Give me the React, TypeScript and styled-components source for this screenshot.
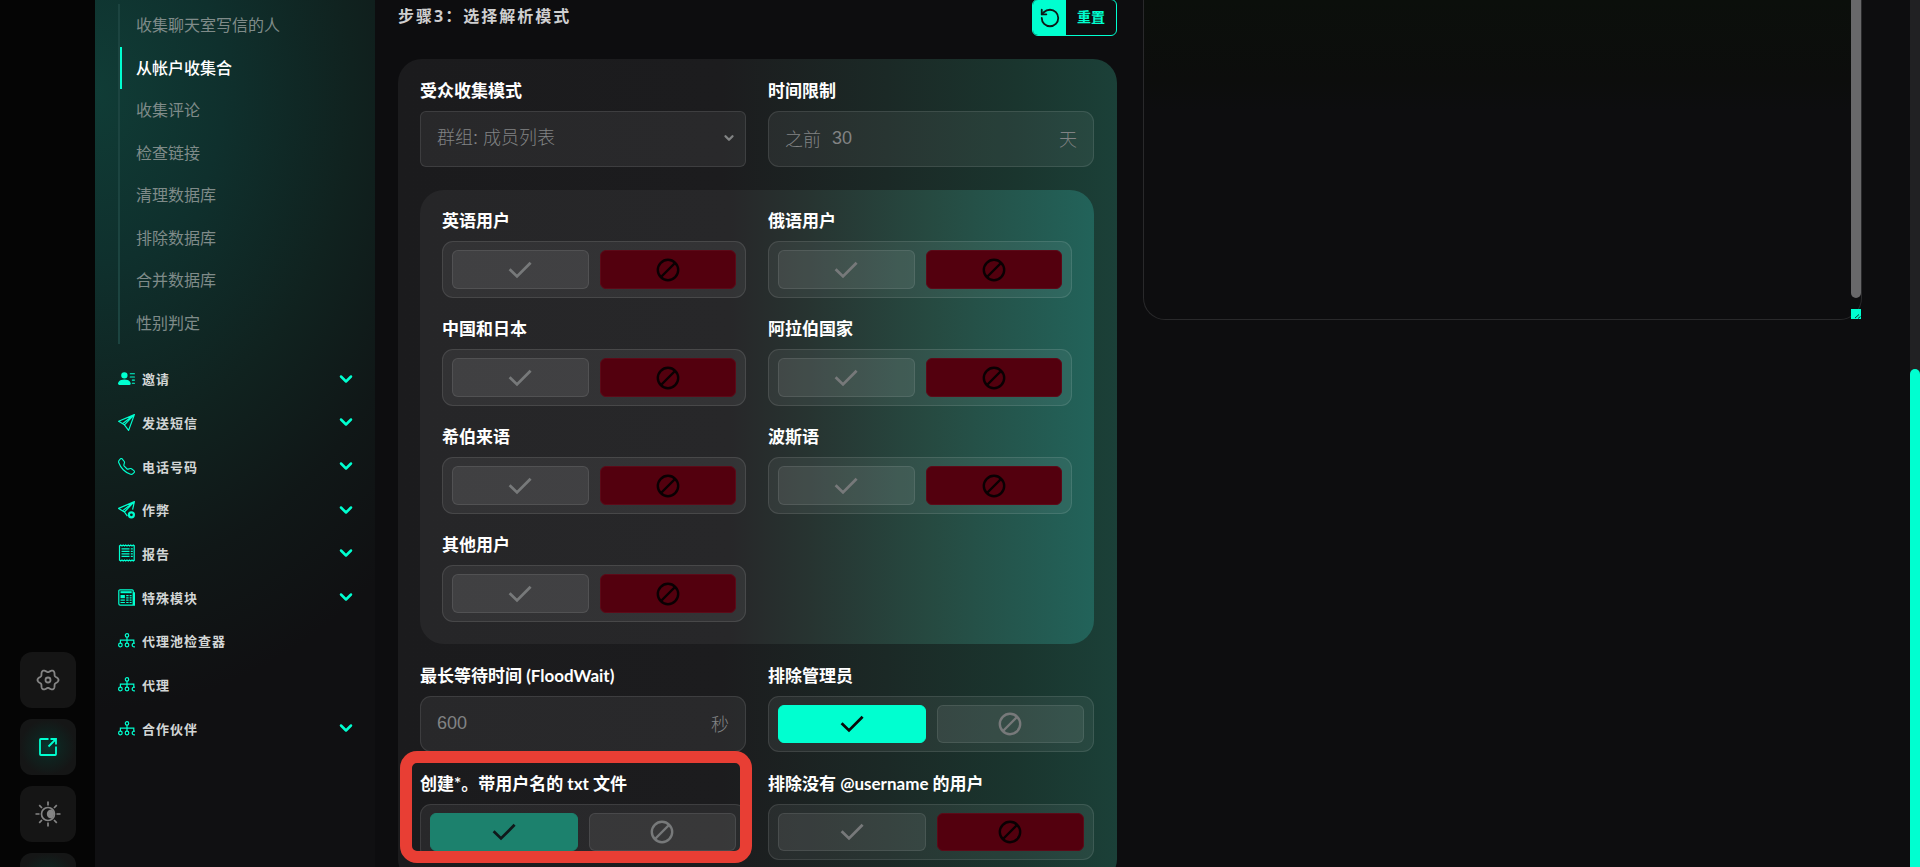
import React, { useId, useState } from "react";
import styled, { createGlobalStyle, css } from "styled-components";
import { ChevronDown, RotateCcw } from "lucide-react";
import { BsPersonLinesFill, BsTelephone } from "react-icons/bs";

const ACCENT = "#00ffd0";

const GlobalStyle = createGlobalStyle`
  *, *::before, *::after { box-sizing: border-box; }
  html, body { margin: 0; background: #0d0d0f; }
  body {
    overflow: hidden;
    color: #fff;
    font-family: "Liberation Sans", "Noto Sans CJK SC", sans-serif;
  }
  button, input, select, textarea { font: inherit; color: inherit; }
`;

const Shell = styled.div`
  display: grid;
  grid-template-columns: 95px 280px minmax(0, 1fr) 10px;
  grid-template-rows: minmax(0, 1fr);
  height: 100vh;
  overflow: hidden;
`;

/* ---------- rail ---------- */

const Rail = styled.nav`
  display: flex;
  flex-direction: column;
  justify-content: flex-end;
  gap: 11px;
  padding-left: 20px;
  margin-bottom: -42px;
  background: #050505;
`;

const RailButton = styled.button<{ $lit?: boolean }>`
  display: grid;
  place-items: center;
  width: 56px;
  height: 56px;
  flex: none;
  padding: 0;
  border: 0;
  border-radius: 12px;
  color: ${(p) => (p.$lit ? ACCENT : "#858585")};
  background: ${(p) =>
    p.$lit ? "radial-gradient(circle, #08382f 0%, #10211e 35%, #151616 70%)" : "#151515"};
`;

/* ---------- sidebar ---------- */

const Sidebar = styled.aside`
  min-width: 0;
  padding: 4px 23px 0;
  overflow: hidden;
  background: radial-gradient(
    ellipse 460px 620px at 0 90px,
    #103c36 0%,
    #0f302d 28%,
    #10221f 56%,
    #101717 78%,
    #101012 100%
  );
`;

const SubList = styled.ul`
  display: grid;
  grid-auto-rows: 1fr;
  min-height: 340px;
  margin: 0 0 14px;
  padding: 0;
  list-style: none;
  border-left: 2px solid #1c4440;
`;

const SubLink = styled.a<{ $active?: boolean }>`
  display: flex;
  align-items: center;
  height: 100%;
  padding: 0 0 2px 14px;
  border-left: 2px solid ${(p) => (p.$active ? ACCENT : "transparent")};
  color: ${(p) => (p.$active ? "#fff" : "#7f8b89")};
  font-size: 16px;
  font-weight: ${(p) => (p.$active ? 500 : 400)};
  text-decoration: none;
`;

const Menu = styled.ul`
  display: grid;
  grid-auto-rows: 1fr;
  min-height: 393px;
  margin: 0;
  padding: 0;
  list-style: none;
`;

const MenuButton = styled.button`
  display: flex;
  align-items: center;
  gap: 7px;
  width: 100%;
  height: 100%;
  padding: 0 0 2px;
  border: 0;
  background: none;
  color: #d3d6d6;
  font-size: 13px;
  font-weight: 700;
  letter-spacing: 1px;
  text-align: left;

  > svg:first-child {
    flex: none;
    color: ${ACCENT};
  }
`;

const MenuChevron = styled(ChevronDown)`
  margin: 0 -4px 0 auto;
  color: ${ACCENT};
`;

/* ---------- main ---------- */

const Main = styled.main`
  display: grid;
  grid-template-columns: minmax(0, 1fr) minmax(0, 1fr);
  column-gap: 26px;
  align-items: start;
  padding: 0 48px 0 23px;
`;

const StepHeader = styled.header`
  display: flex;
  align-items: center;
  justify-content: space-between;
  margin: -1px 0 23px;
`;

const StepTitle = styled.h2`
  margin: 0;
  padding-bottom: 3px;
  color: #cfcfd0;
  font-family: "Open Sans", "Noto Sans CJK SC", sans-serif;
  font-size: 16px;
  font-weight: 700;
  line-height: 20px;
  letter-spacing: 2px;
`;

const ResetButton = styled.button`
  display: flex;
  height: 37px;
  padding: 0;
  overflow: hidden;
  border: 1px solid ${ACCENT};
  border-radius: 6px;
  background: #0d0d0f;
  color: ${ACCENT};
  font-size: 14px;
  font-weight: 700;
`;

const ResetIcon = styled.span`
  display: grid;
  place-items: center;
  width: 33px;
  height: 100%;
  background: ${ACCENT};
  color: #0d1a18;
`;

const ResetText = styled.span`
  align-self: center;
  padding: 0 11px 4px;
`;

const Card = styled.section`
  display: grid;
  grid-template-columns: minmax(0, 1fr) minmax(0, 1fr);
  gap: 23px 22px;
  padding: 23px 23px 23px 22px;
  border-radius: 24px;
  background: linear-gradient(90deg, #1b1b1d 0%, #1c1c1e 45%, #1b2926 68%, #1a352e 86%, #1b4038 100%);
`;

const InnerCard = styled(Card)`
  grid-column: 1 / -1;
  row-gap: 22px;
  padding: 22px;
  background: linear-gradient(90deg, #262628 0%, #272729 46%, #273431 58%, #264a41 76%, #22635a 100%);

  --control-height: 57px;
`;

const Field = styled.div`
  position: relative;
  display: flex;
  flex-direction: column;
  gap: 12px;
  min-width: 0;
`;

const labelText = css`
  font-family: Lato, "Noto Sans CJK SC", sans-serif;
  font-size: 17px;
  font-weight: 700;
  line-height: 17px;
  white-space: nowrap;
`;

const FieldLabel = styled.label`
  ${labelText}
`;

const GroupLabel = styled.span`
  ${labelText}
`;

const controlBox = css`
  display: flex;
  align-items: center;
  height: var(--control-height, 56px);
  border: 1px solid rgba(255, 255, 255, 0.1);
  border-radius: 11px;
  background: rgba(255, 255, 255, 0.06);
`;

const InputBox = styled.div`
  ${controlBox}
  gap: 11px;
  padding: 0 16px 2px;
  color: #818384;
  font-size: 18px;
  font-weight: 300;
`;

const SelectBox = styled(InputBox)`
  padding-right: 9px;
  border-radius: 6px;
`;

const TextInput = styled.input`
  flex: 1;
  min-width: 0;
  padding: 0;
  border: 0;
  outline: 0;
  background: none;
`;

const Select = styled.select`
  flex: 1;
  min-width: 0;
  padding: 0;
  border: 0;
  outline: 0;
  appearance: none;
  background: none;
`;

const ToggleBox = styled.div`
  ${controlBox}
  align-items: stretch;
  gap: 11px;
  padding: 8px 9px;
`;

type Tone = "idle" | "yes" | "no" | "dim";

const tones = {
  idle: css`
    color: #77797a;
    border-color: rgba(255, 255, 255, 0.09);
    background: rgba(255, 255, 255, 0.07);
  `,
  yes: css`
    color: #0a0a0a;
    border-color: ${ACCENT};
    background: ${ACCENT};
  `,
  no: css`
    color: #0a0003;
    border-color: #5c0a18;
    background: #53000e;
  `,
  dim: css`
    color: #10181a;
    border-color: #1c816d;
    background: #1c816d;
  `,
};

const Option = styled.label<{ $tone: Tone }>`
  position: relative;
  display: grid;
  flex: 1;
  place-items: center;
  border: 1px solid;
  border-radius: 6px;
  ${(p) => tones[p.$tone]}
`;

const Radio = styled.input`
  position: absolute;
  inset: 0;
  margin: 0;
  opacity: 0;
`;

const Highlight = styled.span`
  position: absolute;
  inset: -24px -6px -3px -20px;
  border: 12px solid #e83e34;
  border-radius: 17px;
  pointer-events: none;
`;

/* ---------- result panel ---------- */

const Output = styled.section`
  position: relative;
  height: 320px;
  border: 1px solid #29292b;
  border-top: 0;
  border-radius: 0 0 22px 22px;
  background: linear-gradient(#0b0f0b 0, #0c0d0c 80px, #0d0d0f 110px);
`;

const OutputText = styled.textarea`
  display: block;
  width: 100%;
  height: 100%;
  padding: 20px;
  border: 0;
  outline: 0;
  resize: none;
  background: none;
`;

const OutputThumb = styled.span`
  position: absolute;
  top: 0;
  right: 0;
  bottom: 21px;
  width: 10px;
  border-radius: 0 0 5px 5px;
  background: #68686a;
`;

const OutputGrip = styled.svg`
  position: absolute;
  right: 0;
  bottom: 0;
  background: ${ACCENT};
`;

const PageTrack = styled.div`
  display: grid;
  grid-template-rows: 369fr 498fr;
  background: #212123;
`;

const PageThumb = styled.span`
  grid-row: 2;
  border-radius: 5px 5px 0 0;
  background: ${ACCENT};
`;

/* ---------- icons ---------- */

const CheckIcon = () => (
  <svg width="24" height="18" viewBox="0 0 24 18" fill="none" stroke="currentColor" strokeWidth="2.8">
    <path d="M1.6 8.2 9 15.4 22.6 1.8" />
  </svg>
);

const BanIcon = () => (
  <svg width="24" height="24" viewBox="0 0 24 24" fill="none" stroke="currentColor" strokeWidth="2.4">
    <circle cx="12" cy="12" r="10.2" />
    <path d="M5 19 19 5" />
  </svg>
);

const PlaneIcon = () => (
  <svg width="17" height="17" viewBox="0 0 17 17" fill="none" stroke="currentColor" strokeWidth="1.2" strokeLinejoin="round">
    <path d="M16.4.6.6 7.2l5.8 3.6 4.2 5.6zM16.4.6 4.8 9.4M16.4.6 6.4 10.8" />
  </svg>
);

const PlanePlusIcon = () => (
  <svg width="17" height="18" viewBox="0 0 17 18" fill="none" stroke="currentColor" strokeWidth="1.2" strokeLinejoin="round">
    <path d="M9.4 15.2 6.4 11 .6 7.400 16.4.6l-1.800 8M16.4.6 4.800 9.600M16.4.6 6.4 11" />
    <circle cx="13.400" cy="13.800" r="2.500" strokeWidth="2.200" />
  </svg>
);

const ReceiptIcon = () => (
  <svg width="17" height="18" viewBox="0 0 17 18" fill="none" stroke="currentColor" strokeWidth="1.2">
    <path d="M1.5 1.5v15M16.200 1.5v15" />
    <path d="m1.5 2 1.2-1L4 2l1.2-1 1.3 1 1.2-1L9 2l1.3-1 1.2 1 1.3-1L14 2l1.3-1 1.2 1M1.5 16l1.2 1L4 16l1.2 1 1.3-1 1.2 1L9 16l1.3 1 1.2-1 1.3 1 1.2-1 1.3 1 1.2-1" />
    <path d="M3.5 4.800h8M3.5 7.300h8M3.5 9.800h8M3.5 12.300h8M12.800 4.800h2M12.800 7.300h2M12.800 9.800h2M12.800 12.300h2" />
  </svg>
);

const NewsIcon = () => (
  <svg width="17" height="17" viewBox="0 0 17 17" fill="none" stroke="currentColor" strokeWidth="1.2">
    <path d="M2 .8h12.2a1 1 0 0 1 1 1v13a1 1 0 0 0 1 1.2M.8 2v12.8a1.4 1.4 0 0 0 1.4 1.4h14.2V3.2" />
    <path d="M.8 2A1.2 1.2 0 0 1 2 .8" />
    <path d="M2.5 3.2h11.2" strokeWidth="2" />
    <path d="M2.5 7.6h4.4" strokeWidth="3.2" />
    <path d="M8.2 6.6h2.4M11.6 6.6h2M8.2 8.8h2.4M11.6 8.8h2M2.5 11.2h4.4M8.2 11.2h2.4M11.6 11.2h2M2.5 13.5h4.4M8.2 13.5h2.4M11.6 13.5h2" />
  </svg>
);

const TreeIcon = () => (
  <svg width="17" height="15" viewBox="0 0 17 15" fill="none" stroke="currentColor" strokeWidth="1.2">
    <circle cx="9" cy="2.4" r="1.7" />
    <circle cx="2.4" cy="12" r="1.8" />
    <circle cx="9" cy="12" r="1.8" />
    <path d="M16.8 10.4a1.8 1.8 0 1 0 0 3.2" />
    <path d="M9 4.1v6.1M2.4 10.2V7.2h13.4v3" />
  </svg>
);

/* Six-lobed outline: the radius swells once every sixty degrees. */
const gearOutline = Array.from({ length: 120 }, (_, i) => {
  const angle = (i * Math.PI) / 60;
  const radius = 9.2 + 1.3 * Math.cos(6 * angle);
  const x = 12 + radius * Math.cos(angle);
  const y = 12 + radius * Math.sin(angle);
  return `${x.toFixed(2)},${y.toFixed(2)}`;
}).join(" ");

const GearIcon = () => (
  <svg width="24" height="24" viewBox="0 0 24 24" fill="none" stroke="currentColor" strokeWidth="1.8" strokeLinejoin="round">
    <polygon points={gearOutline} />
    <circle cx="12" cy="12" r="2.5" />
  </svg>
);

const ShareIcon = () => (
  <svg width="20" height="20" viewBox="0 0 20 20" fill="none" stroke="currentColor" strokeWidth="1.8">
    <path d="M10.5 2H2.8a.8.8 0 0 0-.8.8v14.4a.8.8 0 0 0 .8.8h14.4a.8.8 0 0 0 .8-.8V9.5" />
    <path d="M12.5 2H18v5.5M18 2l-7.500 7.500" />
  </svg>
);

const ThemeIcon = () => (
  <svg width="26" height="26" viewBox="0 0 26 26" fill="none" stroke="currentColor" strokeWidth="1.7">
    <circle cx="13" cy="13" r="6.5" />
    <path d="M17 8.500a4.600 4.600 0 0 0-5.200 4.500 4.600 4.600 0 0 0 5.200 4.500 6 6 0 0 0 2-4.500 6 6 0 0 0-2-4.500z" fill="currentColor" stroke="none" />
    <path d="M13 .5v4M13 21.500v4M.5 13h4M21.500 13h4M4.200 4.200 7 7M19 19l2.800 2.800M4.200 21.800 7 19M19 7l2.800-2.800" />
  </svg>
);

/* ---------- data ---------- */

const subItems = [
  "收集聊天室写信的人",
  "从帐户收集合",
  "收集评论",
  "检查链接",
  "清理数据库",
  "排除数据库",
  "合并数据库",
  "性别判定",
];

const menuItems = [
  { text: "邀请", icon: <BsPersonLinesFill size={17} />, open: true },
  { text: "发送短信", icon: <PlaneIcon />, open: true },
  { text: "电话号码", icon: <BsTelephone size={17} />, open: true },
  { text: "作弊", icon: <PlanePlusIcon />, open: true },
  { text: "报告", icon: <ReceiptIcon />, open: true },
  { text: "特殊模块", icon: <NewsIcon />, open: true },
  { text: "代理池检查器", icon: <TreeIcon />, open: false },
  { text: "代理", icon: <TreeIcon />, open: false },
  { text: "合作伙伴", icon: <TreeIcon />, open: true },
];

const languages = ["英语用户", "俄语用户", "中国和日本", "阿拉伯国家", "希伯来语", "波斯语", "其他用户"];

interface ToggleProps {
  label: string;
  initial?: boolean;
  muted?: boolean;
  highlighted?: boolean;
}

function Toggle({ label, initial = false, muted = false, highlighted = false }: ToggleProps) {
  const id = useId();
  const [on, setOn] = useState(initial);
  const yesTone: Tone = on ? (muted ? "dim" : "yes") : "idle";
  return (
    <Field>
      <GroupLabel id={id}>{label}</GroupLabel>
      <ToggleBox role="radiogroup" aria-labelledby={id}>
        <Option $tone={yesTone}>
          <Radio type="radio" name={id} aria-label="是" checked={on} onChange={() => setOn(true)} />
          <CheckIcon />
        </Option>
        <Option $tone={on ? "idle" : "no"}>
          <Radio type="radio" name={id} aria-label="否" checked={!on} onChange={() => setOn(false)} />
          <BanIcon />
        </Option>
      </ToggleBox>
      {highlighted && <Highlight />}
    </Field>
  );
}

export default function App() {
  return (
    <>
      <GlobalStyle />
      <Shell>
        <Rail>
          <RailButton aria-label="设置"><GearIcon /></RailButton>
          <RailButton $lit aria-label="打开"><ShareIcon /></RailButton>
          <RailButton aria-label="主题"><ThemeIcon /></RailButton>
          <RailButton $lit aria-label="更多" />
        </Rail>

        <Sidebar>
          <SubList>
            {subItems.map((text, i) => (
              <li key={text}>
                <SubLink href="#" $active={i === 1}>{text}</SubLink>
              </li>
            ))}
          </SubList>
          <Menu>
            {menuItems.map((item) => (
              <li key={item.text}>
                <MenuButton>
                  {item.icon}
                  {item.text}
                  {item.open && <MenuChevron size={20} strokeWidth={3} />}
                </MenuButton>
              </li>
            ))}
          </Menu>
        </Sidebar>

        <Main>
          <div>
            <StepHeader>
              <StepTitle>步骤3：选择解析模式</StepTitle>
              <ResetButton>
                <ResetIcon><RotateCcw size={22} strokeWidth={2} /></ResetIcon>
                <ResetText>重置</ResetText>
              </ResetButton>
            </StepHeader>

            <Card>
              <Field>
                <FieldLabel htmlFor="mode">受众收集模式</FieldLabel>
                <SelectBox>
                  <Select id="mode" defaultValue="members">
                    <option value="members">群组: 成员列表</option>
                  </Select>
                  <ChevronDown size={14} strokeWidth={4} />
                </SelectBox>
              </Field>
              <Field>
                <FieldLabel htmlFor="days">时间限制</FieldLabel>
                <InputBox>
                  <span>之前</span>
                  <TextInput id="days" defaultValue="30" />
                  <span>天</span>
                </InputBox>
              </Field>

              <InnerCard>
                {languages.map((label) => (
                  <Toggle key={label} label={label} />
                ))}
              </InnerCard>

              <Field>
                <FieldLabel htmlFor="wait">最长等待时间 (FloodWait)</FieldLabel>
                <InputBox>
                  <TextInput id="wait" defaultValue="600" />
                  <span>秒</span>
                </InputBox>
              </Field>
              <Toggle label="排除管理员" initial />
              <Toggle label="创建*。带用户名的 txt 文件" initial muted highlighted />
              <Toggle label="排除没有 @username 的用户" />
            </Card>
          </div>

          <Output>
            <OutputText aria-label="结果" />
            <OutputThumb />
            <OutputGrip width="10" height="10" viewBox="0 0 10 10" stroke="#0b3a34" fill="none">
              <path d="M4 9 8 5.500M7 9.500 9.500 7.500" />
            </OutputGrip>
          </Output>
        </Main>

        <PageTrack>
          <PageThumb />
        </PageTrack>
      </Shell>
    </>
  );
}
